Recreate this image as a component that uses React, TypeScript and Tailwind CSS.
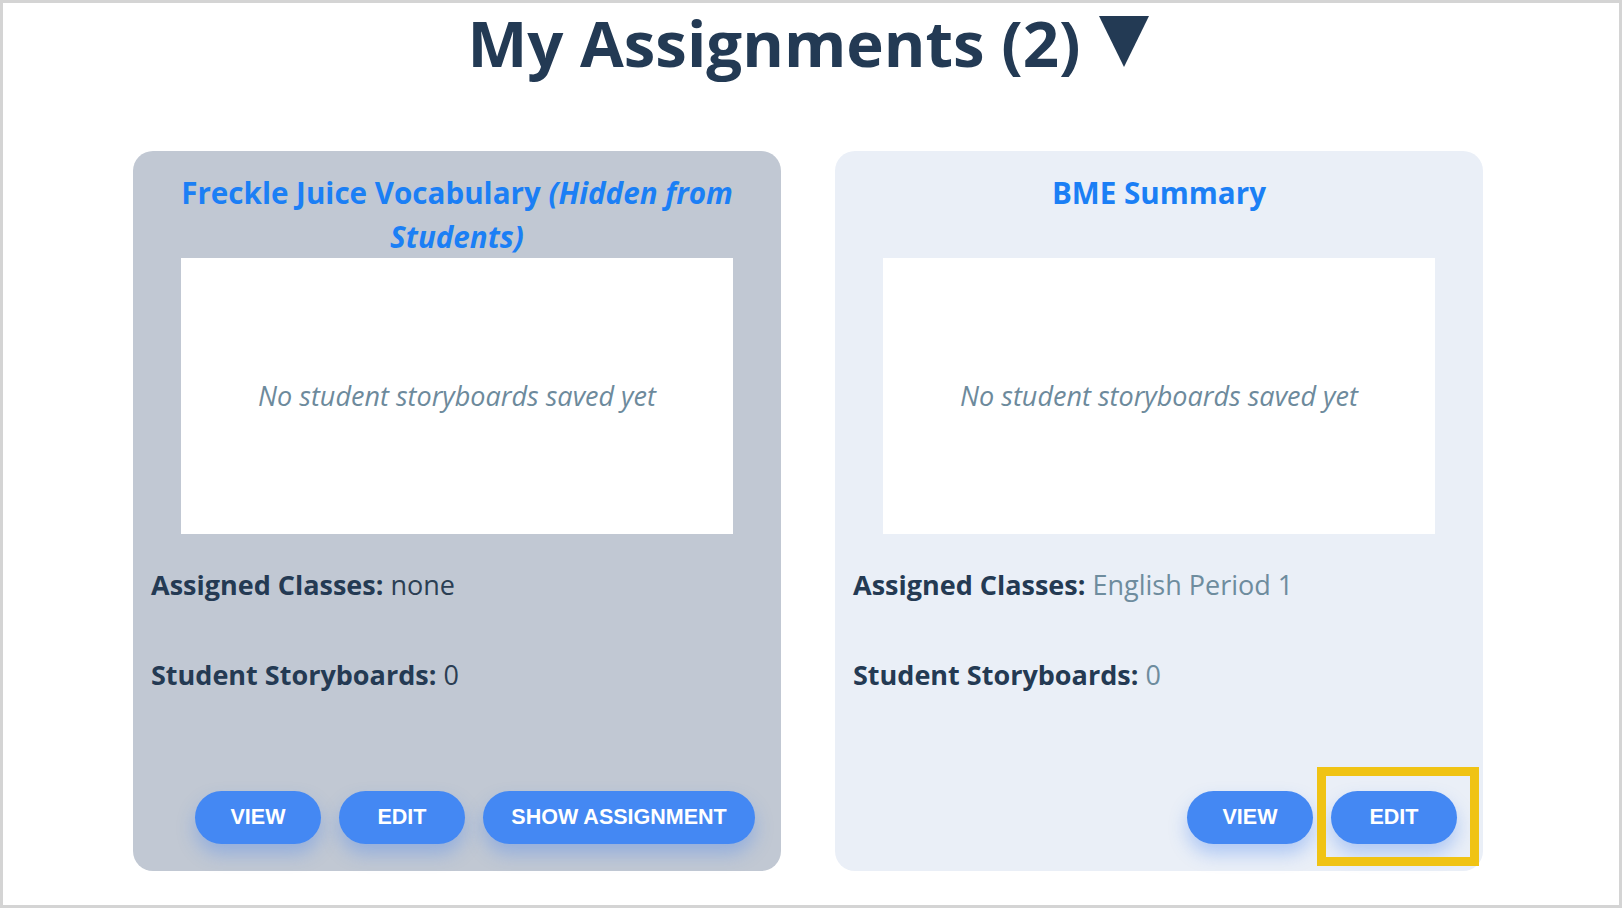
import React from "react";

interface Assignment {
  title: string;
  hidden?: boolean;
  classes: string;
  storyboards: number;
  buttons: string[];
}

const assignments: Assignment[] = [
  {
    title: "Freckle Juice Vocabulary",
    hidden: true,
    classes: "none",
    storyboards: 0,
    buttons: ["VIEW", "EDIT", "SHOW ASSIGNMENT"],
  },
  {
    title: "BME Summary",
    classes: "English Period 1",
    storyboards: 0,
    buttons: ["VIEW", "EDIT"],
  },
];

const openSans = { fontFamily: '"Open Sans", "Liberation Sans", sans-serif' };

const ActionButton = ({ label, highlight }: { label: string; highlight?: boolean }) => {
  const widths: Record<string, string> = {
    VIEW: "w-[126px]",
    EDIT: "w-[126px]",
    "SHOW ASSIGNMENT": "w-[272px]",
  };
  return (
    <div className="relative">
      <button
        type="button"
        className={`${widths[label]} h-[53px] rounded-full bg-[#4488f3] text-white text-[21.5px] font-bold shadow-[0_10px_18px_rgba(66,130,240,0.35)]`}
        style={{ fontFamily: '"Liberation Sans", Arial, sans-serif' }}
      >
        {label}
      </button>
      {/* yellow annotation box */}
      {highlight && (
        <div className="absolute -left-[14px] -right-[22px] -top-[24px] -bottom-[22px] border-[9px] border-[#f0c314] pointer-events-none" />
      )}
    </div>
  );
};

const AssignmentCard = ({ item }: { item: Assignment }) => {
  const valueColor = item.hidden ? "text-[#2b3e53]" : "text-[#6e8c9e]";
  return (
    <div
      className={`flex flex-col w-[648px] h-[720px] rounded-[20px] px-[18px] pt-[20px] pb-[27px] ${
        item.hidden ? "bg-[#c1c8d3]" : "bg-[#eaeff7]"
      }`}
    >
      <div className="mx-[22px] h-[87px] text-center text-[29.6px] leading-[43.5px] font-bold text-[#1b7ff5]">
        {item.title}
        {item.hidden && <em> (Hidden from Students)</em>}
      </div>
      <div className="mx-[30px] h-[276px] bg-white flex items-center justify-center">
        <p className="italic text-[27px] text-[#6d8a9c]">No student storyboards saved yet</p>
      </div>
      <div className="mt-[33px] text-[27px] leading-[36px] text-[#243a53]">
        <span className="font-bold">Assigned Classes:</span>{" "}
        <span className={valueColor}>{item.classes}</span>
      </div>
      <div className="mt-[54px] text-[27px] leading-[36px] text-[#243a53]">
        <span className="font-bold">Student Storyboards:</span>{" "}
        <span className={valueColor}>{item.storyboards}</span>
      </div>
      <div className="mt-auto flex justify-end gap-[18px] pr-[8px]">
        {item.buttons.map((b) => (
          <ActionButton key={b} label={b} highlight={!item.hidden && b === "EDIT"} />
        ))}
      </div>
    </div>
  );
};

const App = () => {
  return (
    <div
      className="w-[1622px] h-[908px] border-[3px] border-[#d4d4d4] bg-white overflow-hidden"
      style={openSans}
    >
      <div className="ml-[130px] w-[1350px]">
        <div className="flex justify-center items-start gap-[18px] pt-[8px]">
          <h1 className="text-[63.5px] leading-[64px] font-bold text-[#233a54]">My Assignments (2)</h1>
          <svg width="50" height="51" viewBox="0 0 50 51" className="mt-[5px]">
            <polygon points="0,0 50,0 25,51" fill="#233a54" />
          </svg>
        </div>
        <div className="flex gap-[54px] mt-[76px]">
          {assignments.map((a) => (
            <AssignmentCard key={a.title} item={a} />
          ))}
        </div>
      </div>
    </div>
  );
};

export default App;
